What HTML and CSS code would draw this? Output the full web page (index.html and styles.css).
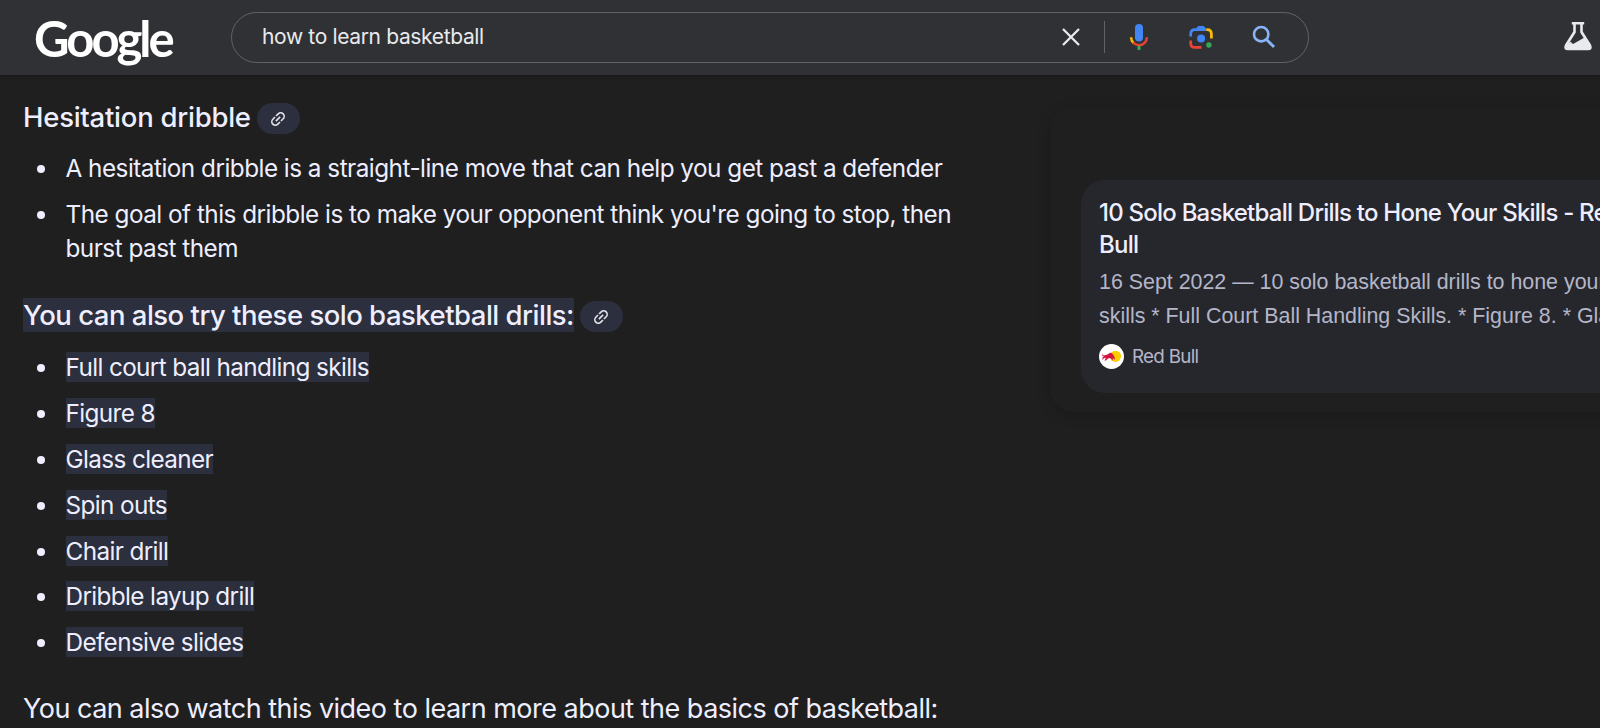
FILE: index.html
```html
<!DOCTYPE html>
<html lang="en">
<head>
    <meta charset="UTF-8">
    <meta name="viewport" content="width=device-width, initial-scale=1.0">
    <title>how to learn basketball - Google Search</title>
    <link rel="stylesheet" href="styles.css">
</head>
<body>
    <header class="header">
        <div class="logo">Google</div>
        <div class="search-box">
            <div class="search-text">how to learn basketball</div>
            <div class="search-icons">
                <svg class="icon-clear" width="20" height="20" viewBox="0 0 20 20"><path d="M2 2L18 18M18 2L2 18" stroke="#e8eaed" stroke-width="2.3"/></svg>
                <span class="divider"></span>
                <svg class="icon-mic" width="20" height="28" viewBox="0 0 20 28">
                    <rect x="6" y="1" width="8" height="17.5" rx="4" fill="#4285f4"/>
                    <path d="M2.1 14.2C2.1 17 3.1 18.6 4.5 20" fill="none" stroke="#fbbc04" stroke-width="2.5"/>
                    <path d="M4.1 19.5C7 22.9 12.6 23 15.6 19.9C17.2 18.3 17.9 16.6 17.9 14.2" fill="none" stroke="#ea4335" stroke-width="2.5"/>
                    <path d="M10 22.8V27" stroke="#34a853" stroke-width="3"/>
                </svg>
                <svg class="icon-lens" width="26" height="26" viewBox="0 0 26 26">
                    <path d="M2.7 12.5V10Q2.7 5.6 7 5.6H16.5" fill="none" stroke="#4285f4" stroke-width="2.7"/>
                    <path d="M7.5 5.8L9.2 3Q9.8 2 11 2H15Q16.2 2 16.8 3L18.5 5.8V7H7.5Z" fill="#4285f4"/>
                    <path d="M18.3 5.6H19.2Q23.4 5.6 23.4 10V14.5" fill="none" stroke="#fbbc04" stroke-width="2.7"/>
                    <path d="M2.7 16.5V19.2Q2.7 23.4 7 23.4H13.5" fill="none" stroke="#ea4335" stroke-width="2.7"/>
                    <circle cx="13.1" cy="14.4" r="4" fill="#4285f4"/>
                    <circle cx="20.9" cy="21" r="2.7" fill="#34a853"/>
                </svg>
                <svg class="icon-search" width="24" height="24" viewBox="0 0 24 24"><circle cx="9.2" cy="9.2" r="7.2" fill="none" stroke="#8ab4f8" stroke-width="2.6"/><path d="M14.2 14.2L22 22" stroke="#8ab4f8" stroke-width="3"/></svg>
            </div>
        </div>
        <svg class="icon-labs" width="30" height="30" viewBox="0 0 30 30">
            <path d="M8.8 2.3H21.2M11.5 2.5V11L3 24.5Q1.3 28 5 28H25Q28.7 28 27 24.5L18.5 11V2.5" fill="none" stroke="#e8eaed" stroke-width="2.6"/>
            <path d="M3 24L8 20.5Q8.5 23.5 11 22.5L21.5 16.5L27.5 25.5L26.5 28H4Z" fill="#e8eaed"/>
        </svg>
    </header>

    <main class="content">
        <section class="answer">
            <h2 class="heading hesitation">
                <span>Hesitation dribble</span>
                <span class="link-chip"><svg width="16" height="16" viewBox="0 0 16 16"><g transform="rotate(-45 8 8)" fill="none" stroke="#e3e3ea" stroke-width="1.6"><path d="M7.3 4.5H4.2A3.5 3.5 0 0 0 4.2 11.5H7.3M8.7 4.5H11.8A3.5 3.5 0 0 1 11.8 11.5H8.7M5 8H11"/></g></svg></span>
            </h2>
            <ul class="list">
                <li><span>A hesitation dribble is a straight-line move that can help you get past a defender</span></li>
                <li><span>The goal of this dribble is to make your opponent think you're going to stop, then<br>burst past them</span></li>
            </ul>
            <h2 class="heading drills">
                <span class="mark">You can also try these solo basketball drills:</span>
                <span class="link-chip"><svg width="16" height="16" viewBox="0 0 16 16"><g transform="rotate(-45 8 8)" fill="none" stroke="#e3e3ea" stroke-width="1.6"><path d="M7.3 4.5H4.2A3.5 3.5 0 0 0 4.2 11.5H7.3M8.7 4.5H11.8A3.5 3.5 0 0 1 11.8 11.5H8.7M5 8H11"/></g></svg></span>
            </h2>
            <ul class="list drills-list">
                <li><div><span class="mark">Full court ball handling skills</span></div></li>
                <li><div><span class="mark">Figure 8</span></div></li>
                <li><div><span class="mark">Glass cleaner</span></div></li>
                <li><div><span class="mark">Spin outs</span></div></li>
                <li><div><span class="mark">Chair drill</span></div></li>
                <li><div><span class="mark">Dribble layup drill</span></div></li>
                <li><div><span class="mark">Defensive slides</span></div></li>
            </ul>
            <p class="video-text">You can also watch this video to learn more about the basics of basketball:</p>
        </section>

        <aside class="sources">
            <div class="source-card">
                <div class="source-title">10 Solo Basketball Drills to Hone Your Skills - Red<br>Bull</div>
                <div class="source-snippet">16 Sept 2022 — 10 solo basketball drills to hone your<br>skills * Full Court Ball Handling Skills. * Figure 8. * Glass</div>
                <div class="source-site">
                    <svg width="25" height="25" viewBox="0 0 25 25">
                        <circle cx="12.5" cy="12.5" r="12.5" fill="#fff"/>
                        <circle cx="16.5" cy="12.3" r="5.6" fill="#ffcc00"/>
                        <path d="M3 9.5Q3.5 11.5 5 11.5L8.5 10.5L11 8.8Q13 8.5 14 10.5L15.5 13L16 15.5L14.500 14.8L13.5 14L14 16.5L11 14L9 14.5L7 16.5H5.5L7 13.5L4.5 14.5L3.5 16.5L3.5 13.5L5 12.5Q2.5 12 3 9.5Z" fill="#d2133f"/>
                    </svg>
                    <span>Red Bull</span>
                </div>
            </div>
        </aside>
    </main>
</body>
</html>
```
FILE: styles.css
```css
* {
    box-sizing: border-box;
}
body {
    margin: 0;
    width: 1600px;
    height: 728px;
    overflow: hidden;
    background: #1f1f1f;
    color: #eeeeff;
    font-family: Inter, sans-serif;
}
.header {
    display: flex;
    align-items: center;
    height: 75px;
    background: #303134;
    box-shadow: 0 1px 4px rgba(0, 0, 0, 0.25);
}
.logo {
    width: 231px;
    padding-left: 34px;
    font-family: Lato, sans-serif;
    font-size: 49px;
    font-weight: 700;
    color: white;
    letter-spacing: -3px;
}
.search-box {
    display: flex;
    align-items: center;
    justify-content: space-between;
    width: 1078px;
    height: 51px;
    padding: 0 32px 2px 30px;
    border: 1px solid #5f6368;
    border-radius: 26px;
}
.search-text {
    font-size: 21px;
    letter-spacing: -0.35px;
    color: #e8eaed;
}
.search-icons {
    display: flex;
    align-items: center;
}
.divider {
    width: 1px;
    height: 32px;
    margin: 0 24px 0 23px;
    background: #5f6368;
}
.icon-lens {
    margin: 0 38px 0 39px;
}
.icon-labs {
    margin-left: 254px;
    margin-bottom: 3px;
}
.content {
    display: flex;
}
.answer {
    flex: none;
    width: 1050px;
    padding: 24px 0 0 23px;
    white-space: nowrap;
}
.heading {
    display: flex;
    align-items: center;
    gap: 6px;
    height: 36px;
    margin: 0;
    font-size: 27.5px;
    font-weight: 500;
}
.hesitation {
    letter-spacing: -0.25px;
}
.drills {
    margin-top: 32px;
    letter-spacing: -0.51px;
}
.link-chip {
    display: flex;
    align-items: center;
    justify-content: center;
    width: 43px;
    height: 31px;
    margin-top: 3px;
    border-radius: 16px;
    background: #2c2f3d;
}
.list {
    margin: 17px 0 0;
    padding: 0 0 0 14px;
    list-style: none;
    font-size: 24.3px;
    line-height: 33.8px;
    letter-spacing: -0.51px;
}
.drills-list {
    margin-top: 18px;
    letter-spacing: -0.62px;
}
.list li {
    display: flex;
    margin-bottom: 12px;
}
.list li::before {
    content: "";
    width: 8px;
    height: 8px;
    margin: 13px 20.5px 0 0;
    border-radius: 50%;
    background: #eeeeff;
}
.mark {
    background: #2c2f3d;
}
.video-text {
    margin: 32px 0 0;
    font-size: 27px;
    line-height: 34px;
    letter-spacing: -0.51px;
}
.sources {
    flex: none;
    width: 620px;
    height: 305px;
    margin-top: 32px;
    padding: 73px 0 0 31px;
    border-radius: 24px;
    box-shadow: 0 3px 14px rgba(0, 0, 0, 0.2);
    white-space: nowrap;
}
.source-card {
    height: 213px;
    padding: 17px 18px;
    border-radius: 24px;
    background: #26272d;
}
.source-title {
    font-size: 24px;
    line-height: 31.7px;
    font-weight: 500;
    letter-spacing: -0.77px;
}
.source-snippet {
    margin-top: 5px;
    font-family: "Liberation Sans", Arial, sans-serif;
    font-size: 21.4px;
    line-height: 34px;
    color: #b4b6c8;
}
.source-site {
    display: flex;
    align-items: center;
    gap: 8px;
    margin-top: 11px;
    font-size: 18.8px;
    letter-spacing: -0.7px;
    color: #b4b6c8;
}
```
